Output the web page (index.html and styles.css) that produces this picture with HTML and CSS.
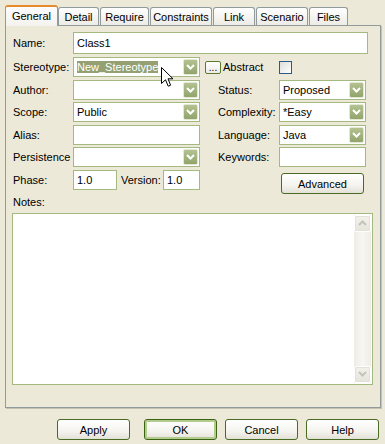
FILE: index.html
```html
<!DOCTYPE html>
<html>
<head>
<meta charset="utf-8">
<link rel="stylesheet" href="styles.css">
</head>
<body>
<div class="dialog">
  <div class="tabs">
    <div class="tab active w-general">General</div>
    <div class="tab w-detail">Detail</div>
    <div class="tab w-require">Require</div>
    <div class="tab w-constraints">Constraints</div>
    <div class="tab w-link">Link</div>
    <div class="tab w-scenario">Scenario</div>
    <div class="tab w-files">Files</div>
  </div>
  <div class="panel">
    <div class="rows">
      <div class="row row-name">
        <span class="label">Name:</span>
        <div class="input input-name">Class1</div>
      </div>
      <div class="row">
        <span class="label">Stereotype:</span>
        <div class="combo left-field"><span class="val"><span class="sel">New_Stereotype</span></span><span class="dd"><svg width="9" height="6" viewBox="0 0 9 6"><polyline points="1,1 4.5,4.5 8,1" fill="none" stroke="#fff" stroke-width="2"/></svg></span></div>
        <div class="abs">
          <span class="dots">...</span>
          <span class="abs-text">Abstract</span>
        </div>
        <span class="check"></span>
      </div>
      <div class="row">
        <span class="label">Author:</span>
        <div class="combo left-field"><span class="val"></span><span class="dd"><svg width="9" height="6" viewBox="0 0 9 6"><polyline points="1,1 4.5,4.5 8,1" fill="none" stroke="#fff" stroke-width="2"/></svg></span></div>
        <span class="rlabel">Status:</span>
        <div class="combo right-field"><span class="val">Proposed</span><span class="dd"><svg width="9" height="6" viewBox="0 0 9 6"><polyline points="1,1 4.5,4.5 8,1" fill="none" stroke="#fff" stroke-width="2"/></svg></span></div>
      </div>
      <div class="row">
        <span class="label">Scope:</span>
        <div class="combo left-field"><span class="val">Public</span><span class="dd"><svg width="9" height="6" viewBox="0 0 9 6"><polyline points="1,1 4.5,4.5 8,1" fill="none" stroke="#fff" stroke-width="2"/></svg></span></div>
        <span class="rlabel">Complexity:</span>
        <div class="combo right-field"><span class="val">*Easy</span><span class="dd"><svg width="9" height="6" viewBox="0 0 9 6"><polyline points="1,1 4.5,4.5 8,1" fill="none" stroke="#fff" stroke-width="2"/></svg></span></div>
      </div>
      <div class="row">
        <span class="label">Alias:</span>
        <div class="input left-field"></div>
        <span class="rlabel">Language:</span>
        <div class="combo right-field"><span class="val">Java</span><span class="dd"><svg width="9" height="6" viewBox="0 0 9 6"><polyline points="1,1 4.5,4.5 8,1" fill="none" stroke="#fff" stroke-width="2"/></svg></span></div>
      </div>
      <div class="row">
        <span class="label">Persistence</span>
        <div class="combo left-field"><span class="val"></span><span class="dd"><svg width="9" height="6" viewBox="0 0 9 6"><polyline points="1,1 4.5,4.5 8,1" fill="none" stroke="#fff" stroke-width="2"/></svg></span></div>
        <span class="rlabel">Keywords:</span>
        <div class="input right-field"></div>
      </div>
      <div class="row row-phase">
        <span class="label">Phase:</span>
        <div class="input phase-field">1.0</div>
        <span class="vlabel">Version:</span>
        <div class="input version-field">1.0</div>
        <span class="btn advanced">Advanced</span>
      </div>
    </div>
    <div class="notes-label">Notes:</div>
    <div class="notes">
      <div class="scrollbar">
        <span class="sb-btn"><svg width="9" height="6" viewBox="0 0 9 6"><polyline points="1,5 4.5,1.5 8,5" fill="none" stroke="#c4c4bc" stroke-width="2"/></svg></span>
        <span class="sb-track"></span>
        <span class="sb-btn"><svg width="9" height="6" viewBox="0 0 9 6"><polyline points="1,1 4.5,4.5 8,1" fill="none" stroke="#c4c4bc" stroke-width="2"/></svg></span>
      </div>
    </div>
  </div>
  <div class="buttons">
    <span class="btn apply">Apply</span>
    <span class="btn default">OK</span>
    <span class="btn">Cancel</span>
    <span class="btn">Help</span>
  </div>
</div>
<svg class="cursor" width="13" height="21" viewBox="0 0 13 21"><path d="M0.5 0.5 L0.5 16.5 L4.5 12.8 L7.2 19.2 L9.6 18.2 L7 11.8 L12 11.8 Z" fill="#fff" stroke="#000" stroke-width="1"/></svg>
</body>
</html>
```

FILE: styles.css
```css
html, body {
  margin: 0;
  padding: 0;
}
body {
  width: 385px;
  height: 444px;
  background: #ECE9D8;
  font-family: "Liberation Sans", Arial, sans-serif;
  font-size: 11px;
  color: #000;
  position: relative;
  overflow: hidden;
}
.dialog {
  padding: 4px 0 0 5px;
}
.tabs {
  display: flex;
  align-items: flex-end;
  gap: 1px;
  height: 21px;
  position: relative;
  z-index: 2;
}
.tab {
  box-sizing: border-box;
  height: 18px;
  border: 1px solid #919B9C;
  border-bottom: none;
  border-radius: 3px 3px 0 0;
  background: linear-gradient(#ffffff, #ECEBE6);
  display: flex;
  align-items: center;
  justify-content: center;
  padding-top: 1px;
}
.tab.active {
  height: 21px;
  border-top: 2px solid #E68B2C;
  background: linear-gradient(#FCFCFE, #F4F3EE);
  margin-bottom: -1px;
  padding-top: 0;
  padding-bottom: 2px;
}
.w-general { width: 53px; margin-right: -1px; }
.w-detail { width: 41px; }
.w-require { width: 49px; }
.w-constraints { width: 62px; }
.w-link { width: 42px; }
.w-scenario { width: 52px; }
.w-files { width: 39px; }

.panel {
  box-sizing: border-box;
  width: 376px;
  height: 383px;
  border: 1px solid #919B9C;
  box-shadow: 1px 1px 0 #c5c2b2;
  background: #ECE9D8;
  padding: 6px 0 0 7px;
}
.rows {
  display: flex;
  flex-direction: column;
  gap: 2.5px;
}
.row {
  display: flex;
  align-items: center;
  height: 20px;
}
.row-name {
  height: 22px;
  margin-bottom: 0.5px;
}
.label {
  width: 60px;
  flex: none;
}
.input, .combo {
  box-sizing: border-box;
  height: 20px;
  border: 1px solid #A4B97F;
  background: #fff;
  flex: none;
  display: flex;
  align-items: center;
  padding-left: 3px;
}
.input-name {
  width: 295px;
  height: 22px;
}
.left-field { width: 127px; }
.right-field { width: 87px; }
.combo { padding-left: 0; }
.combo .val {
  flex: 1;
  padding-left: 3px;
  white-space: nowrap;
  overflow: hidden;
}
.sel {
  background: #94A072;
  color: #fff;
}
.dd {
  width: 15px;
  height: 16px;
  margin-right: 1px;
  box-sizing: border-box;
  border: 1px solid #E2E8D2;
  border-radius: 2px;
  background: linear-gradient(#B3C290, #92A46C);
  display: flex;
  align-items: center;
  justify-content: center;
}
.abs {
  width: 74px;
  margin-left: 5px;
  display: flex;
  align-items: center;
  flex: none;
}
.dots {
  box-sizing: border-box;
  width: 16px;
  height: 13px;
  border: 1px solid #5B7A2E;
  border-radius: 2px;
  background: linear-gradient(#ffffff, #ECEBE6);
  font-size: 10px;
  line-height: 11px;
  text-align: center;
}
.abs-text {
  margin-left: 2px;
  font-size: 11px;
}
.check {
  box-sizing: border-box;
  width: 13px;
  height: 13px;
  border: 1px solid #2A5A8A;
  background: linear-gradient(135deg, #DCDCD7, #ffffff);
  flex: none;
}
.rlabel {
  margin-left: 18px;
  width: 61px;
  flex: none;
}
.phase-field { width: 44px; }
.vlabel {
  margin-left: 4px;
  width: 42px;
  flex: none;
}
.version-field { width: 37px; }
.btn {
  box-sizing: border-box;
  height: 21px;
  width: 73px;
  border: 1px solid #4A6B25;
  border-radius: 3px;
  background: linear-gradient(#ffffff 0%, #F4F3EE 60%, #E3E1D6 100%);
  display: flex;
  align-items: center;
  justify-content: center;
  font-size: 11px;
  flex: none;
}
.advanced {
  width: 83px;
  margin-left: 81px;
  align-self: flex-start;
  margin-top: 3.5px;
}
.notes-label {
  margin-top: 6px;
  line-height: 13px;
}
.notes {
  box-sizing: border-box;
  width: 361px;
  height: 172px;
  margin-top: 4px;
  margin-left: -1px;
  border: 1px solid #A4B97F;
  background: #fff;
  display: flex;
  justify-content: flex-end;
  padding: 1px;
}
.scrollbar {
  width: 17px;
  display: flex;
  flex-direction: column;
  background: linear-gradient(90deg, #EEEDE5, #F7F7F3 50%, #EEEDE5);
}
.sb-btn {
  box-sizing: border-box;
  height: 17px;
  border: 1px solid #fff;
  border-radius: 2px;
  background: linear-gradient(#F2F1EB, #E6E5DC);
  box-shadow: 0 0 0 1px #E4E2D8 inset;
  display: flex;
  align-items: center;
  justify-content: center;
}
.sb-track { flex: 1; }
.buttons {
  display: flex;
  justify-content: flex-end;
  gap: 8px;
  margin-top: 11px;
  width: 374px;
}
.apply { margin-right: 6px; }
.default {
  border-color: #3B6314;
  box-shadow: inset 0 0 0 2px #B4CB8E;
}
.cursor {
  position: absolute;
  left: 161px;
  top: 67px;
}
```
